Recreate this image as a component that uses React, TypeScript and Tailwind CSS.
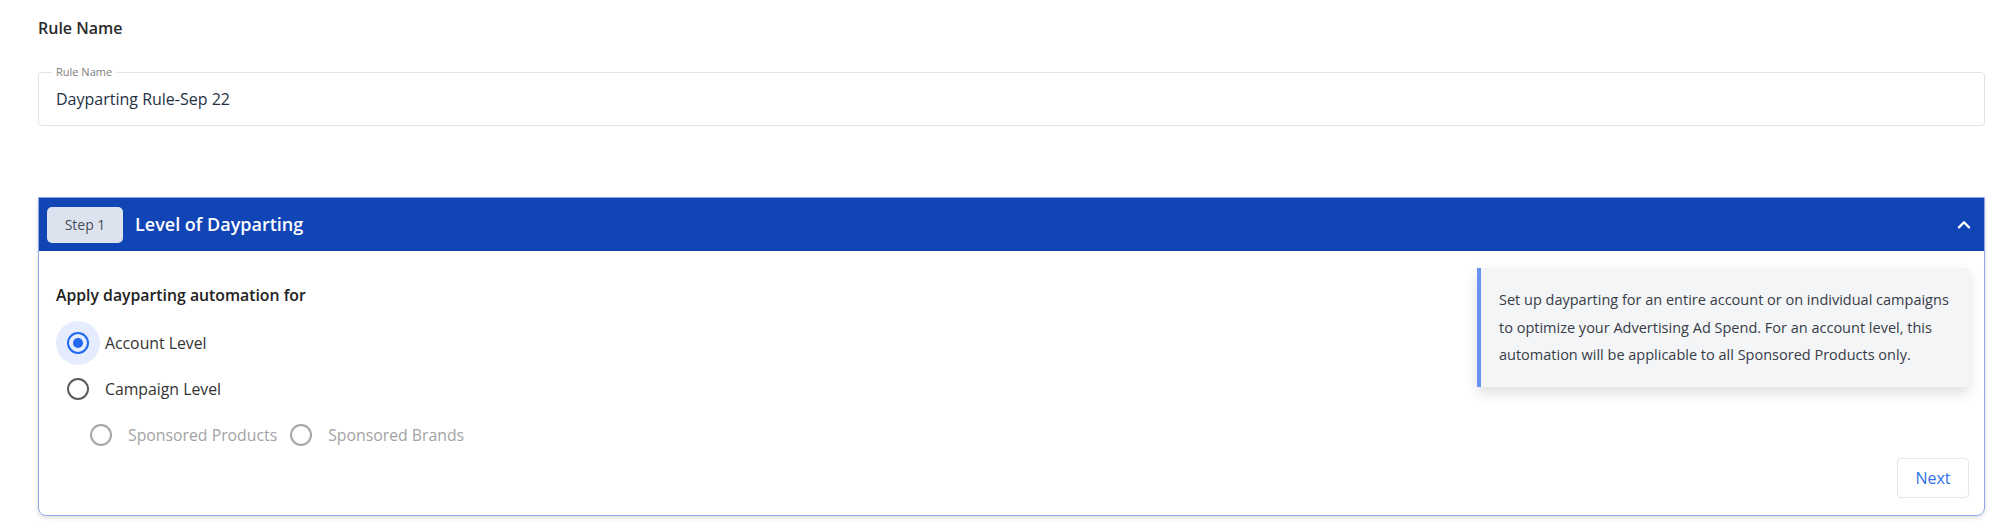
import React from "react";

type RadioProps = {
  label: string;
  checked?: boolean;
  disabled?: boolean;
};

function Radio({ label, checked = false, disabled = false }: RadioProps) {
  const ring = checked
    ? "border-[#2268f0]"
    : disabled
      ? "border-[#a6a6a6]"
      : "border-[#5c5c5c]";
  return (
    <label className="flex h-[44px] items-center mr-[2px] cursor-pointer">
      <span
        className={`flex h-[44px] w-[44px] items-center justify-center rounded-full ${
          checked ? "bg-[#e4ecfd]" : ""
        }`}
      >
        <span
          className={`flex h-[22px] w-[22px] items-center justify-center rounded-full border-2 ${ring}`}
        >
          {checked && <span className="h-[10px] w-[10px] rounded-full bg-[#2268f0]" />}
        </span>
      </span>
      <span
        className={`ml-[5px] text-[15.8px] leading-[24px] ${
          disabled ? "text-[#a3a3a3]" : "text-[#333333]"
        }`}
      >
        {label}
      </span>
    </label>
  );
}

export default function App() {
  return (
    <div className="min-h-[531px] w-full bg-white pl-[38px] pr-[14px] pt-[17px] font-['Open_Sans',sans-serif]">
      <h2 className="text-[16px] font-semibold leading-[22px] text-[#2b2b2b]">Rule Name</h2>

      <div className="relative mt-[33px] h-[54px] rounded-[4px] border border-[#e2e2e2]">
        <span className="absolute left-[13px] top-[-8px] bg-white px-[4px] text-[11px] leading-[14px] text-[#808080]">
          Rule Name
        </span>
        <div className="flex h-full items-center pl-[17px] text-[16px] text-[#263043]">
          Dayparting Rule-Sep 22
        </div>
      </div>

      <div className="mt-[71px] overflow-hidden rounded-b-[8px] border border-[#8fa7e6] shadow-[0_2px_5px_rgba(0,0,0,0.12)]">
        <div className="flex h-[53px] items-center justify-between bg-[#1144b5] pl-[8px] pr-[9px]">
          <div className="flex items-center gap-[12px]">
            <span className="flex h-[36px] w-[76px] items-center justify-center rounded-[5px] bg-[#dde3ee] text-[14px] text-[#474c56]">
              Step 1
            </span>
            <span className="text-[18px] font-semibold text-white">Level of Dayparting</span>
          </div>
          <svg viewBox="0 0 24 24" className="h-[22px] w-[22px]" fill="none">
            <path d="M6.5 14.5l5.5-5.5 5.5 5.5" stroke="white" strokeWidth="2.6" strokeLinecap="round" strokeLinejoin="round" />
          </svg>
        </div>

        <div className="pb-[17px] pl-[17px] pr-[15px] pt-[17px]">
          <div className="flex justify-between">
            <div className="pt-[15px]">
              <p className="text-[15.8px] font-semibold leading-[24px] text-[#222222]">
                Apply dayparting automation for
              </p>
              <div className="mt-[14px] flex flex-col gap-[2px]">
                <Radio label="Account Level" checked />
                <Radio label="Campaign Level" />
                <div className="flex pl-[23px]">
                  <Radio label="Sponsored Products" disabled />
                  <Radio label="Sponsored Brands" disabled />
                </div>
              </div>
            </div>

            <div className="h-fit w-[492px] border-l-[4px] border-[#6893f0] bg-[#f4f5f7] px-[18px] py-[18px] text-[14.5px] leading-[27.5px] text-[#373c47] shadow-[0_6px_12px_rgba(0,0,0,0.13)]">
              Set up dayparting for an entire account or on individual campaigns to optimize your
              Advertising Ad Spend. For an account level, this automation will be applicable to all
              Sponsored Products only.
            </div>
          </div>

          <div className="mt-[1px] flex justify-end">
            <button className="h-[40px] w-[72px] rounded-[4px] border border-[#e3e6ea] bg-white text-[16px] font-medium text-[#2f6fe6]">
              Next
            </button>
          </div>
        </div>
      </div>
    </div>
  );
}
